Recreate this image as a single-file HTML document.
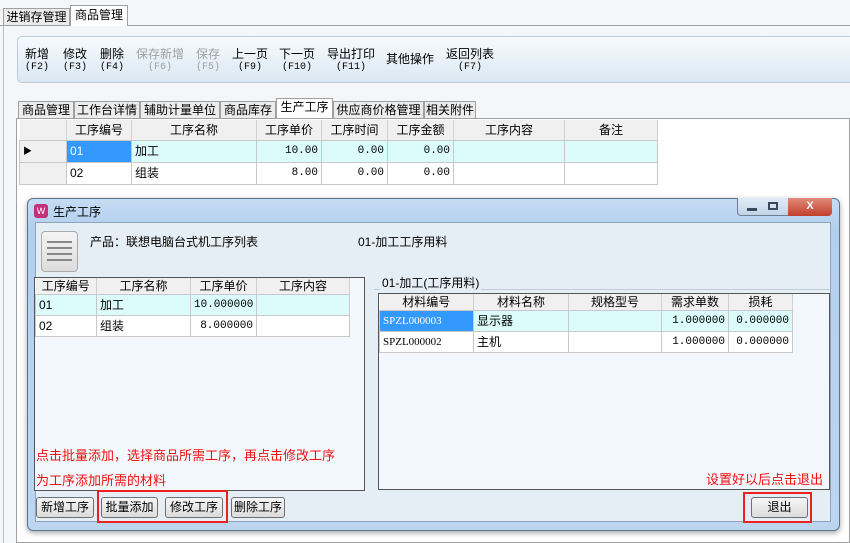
<!DOCTYPE html>
<html><head><meta charset="utf-8"><style>
*{margin:0;padding:0;box-sizing:border-box}
body{width:850px;height:543px;overflow:hidden;background:#f4f6f8;font-family:"Liberation Sans","Noto Sans CJK SC",sans-serif;font-size:12px;color:#000;position:relative}
.a{position:absolute}
.tab{position:absolute;border:1px solid #a0a0a0;border-bottom:none;background:#ececec;text-align:center;font-size:12px;line-height:16px}
.tb{position:absolute;text-align:center;font-size:12px;line-height:13px}
.tb small{display:block;font-size:10px;font-family:"Liberation Mono","Noto Sans CJK SC",monospace}
.g{font-size:12px;border-collapse:collapse;position:absolute;background:#fff;table-layout:fixed}
.g td{border:1px solid #c8c8c8;height:22px;padding:0 3px;white-space:nowrap;line-height:14px;overflow:hidden}
.g th{font-weight:normal;background:#f0f0f0;border-right:1px solid #d0d0d0;border-bottom:1px solid #c8c8c8;height:20px;line-height:14px}
.d td{height:21px}
.d th{height:16px}
.sel td{background:#dcfcfc}
.n{text-align:right;font-family:"Liberation Mono",monospace;font-size:11px}
.btn{position:absolute;height:21px;border:1px solid #707070;border-radius:3px;background:linear-gradient(#f6f6f6,#dcdcdc);text-align:center;line-height:19px;font-size:12px}
.red{color:#f01010;font-size:13px}
</style></head><body>
<div class="a" style="left:0;top:25px;width:850px;height:1px;background:#a0a0a0"></div>
<div class="tab" style="left:3px;top:8px;width:67px;height:17px">进销存管理</div>
<div class="tab" style="left:70px;top:5px;width:58px;height:21px;background:#fff;line-height:19px">商品管理</div>
<div class="a" style="left:3px;top:26px;width:1px;height:517px;background:#c0c0c0"></div>
<div class="a" style="left:17px;top:36px;width:840px;height:47px;border:1px solid #b8cede;border-radius:5px;background:linear-gradient(#f6fafd,#dbe8f3)"></div>
<div class="tb" style="left:22px;top:48px;width:30px">新增<small>(F2)</small></div>
<div class="tb" style="left:60px;top:48px;width:30px">修改<small>(F3)</small></div>
<div class="tb" style="left:97px;top:48px;width:30px">删除<small>(F4)</small></div>
<div class="tb" style="left:136px;top:48px;width:48px;color:#a0a0a0">保存新增<small>(F6)</small></div>
<div class="tb" style="left:193px;top:48px;width:30px;color:#a0a0a0">保存<small>(F5)</small></div>
<div class="tb" style="left:230px;top:48px;width:40px">上一页<small>(F9)</small></div>
<div class="tb" style="left:276px;top:48px;width:42px">下一页<small>(F10)</small></div>
<div class="tb" style="left:325px;top:48px;width:52px">导出打印<small>(F11)</small></div>
<div class="tb" style="left:384px;top:53px;width:52px">其他操作</div>
<div class="tb" style="left:444px;top:48px;width:52px">返回列表<small>(F7)</small></div>
<div class="tab" style="left:18px;top:101px;width:56px;height:17px">商品管理</div>
<div class="tab" style="left:74px;top:101px;width:66px;height:17px">工作台详情</div>
<div class="tab" style="left:140px;top:101px;width:80px;height:17px">辅助计量单位</div>
<div class="tab" style="left:220px;top:101px;width:56px;height:17px">商品库存</div>
<div class="tab" style="left:276px;top:98px;width:57px;height:21px;background:#fff">生产工序</div>
<div class="tab" style="left:333px;top:101px;width:91px;height:17px">供应商价格管理</div>
<div class="tab" style="left:424px;top:101px;width:52px;height:17px">相关附件</div>
<div class="a" style="left:16px;top:118px;width:834px;height:425px;border:1px solid #a0a0a0;background:#fff"></div>
<table class="g" style="left:19px;top:120px;width:639px">
<tr><th style="width:47px"></th><th style="width:65px">工序编号</th><th style="width:125px">工序名称</th><th style="width:65px">工序单价</th><th style="width:66px">工序时间</th><th style="width:66px">工序金额</th><th style="width:111px">工序内容</th><th>备注</th></tr>
<tr class="sel"><td style="background:#f0f0f0;font-size:9px">▶</td><td style="background:#3399ff;color:#fff">01</td><td>加工</td><td class="n">10.00</td><td class="n">0.00</td><td class="n">0.00</td><td></td><td></td></tr>
<tr><td style="background:#f0f0f0"></td><td>02</td><td>组装</td><td class="n">8.00</td><td class="n">0.00</td><td class="n">0.00</td><td></td><td></td></tr>
</table>
<!-- dialog -->
<div class="a" style="left:27px;top:198px;width:813px;height:333px;border:1px solid #5a7590;border-radius:6px;background:linear-gradient(#c6dcf2,#b2cfee 30px,#bcd6f0);box-shadow:0 2px 6px rgba(0,0,0,.35)"></div>
<div class="a" style="left:34px;top:204px;width:14px;height:14px;border-radius:3px;background:#c2307a;color:#fff;font-size:9px;text-align:center;line-height:14px">W</div>
<div class="a" style="left:53px;top:203px;font-size:12px">生产工序</div>
<div class="a" style="left:737px;top:198px;width:95px;height:18px;border:1px solid #6d7f94;border-top:none;border-radius:0 0 4px 4px;background:linear-gradient(#e0ebf7,#c3d4e7)"></div>
<div class="a" style="left:788px;top:198px;width:44px;height:18px;border-radius:0 0 4px 0;background:linear-gradient(#e08a7a,#c2402c);color:#fff;text-align:center;font-weight:bold;font-size:11px;line-height:17px">X</div>
<div class="a" style="left:747px;top:208px;width:10px;height:3px;background:#3a4a5e"></div>
<div class="a" style="left:768px;top:202px;width:10px;height:8px;border:2px solid #3a4a5e"></div>
<div class="a" style="left:35px;top:222px;width:796px;height:300px;border:1px solid #8ea4bc;background:#e6eef5"></div>
<div class="a" style="left:41px;top:231px;width:37px;height:41px;border:1px solid #aaa;border-radius:4px;background:linear-gradient(#f4f4f4,#dcdcdc)"></div>
<div class="a" style="left:47px;top:241px;width:25px;height:2px;background:#888;box-shadow:0 6px #888,0 12px #888,-0 18px #888"></div>
<div class="a" style="left:90px;top:233px;font-size:12px">产品：联想电脑台式机工序列表</div>
<div class="a" style="left:358px;top:233px;font-size:12px">01-加工工序用料</div>
<div class="a" style="left:34px;top:277px;width:331px;height:214px;border:1px solid #555;background:#f2f8fd"></div>
<table class="g d" style="left:35px;top:278px;width:315px">
<tr><th style="width:61px">工序编号</th><th style="width:94px">工序名称</th><th style="width:66px">工序单价</th><th>工序内容</th></tr>
<tr class="sel"><td>01</td><td>加工</td><td class="n">10.000000</td><td></td></tr>
<tr><td>02</td><td>组装</td><td class="n">8.000000</td><td></td></tr>
</table>
<div class="a" style="left:374px;top:289px;width:456px;height:1px;background:#c0ccd8"></div>
<div class="a" style="left:380px;top:276px;background:#e6eef5;padding:0 2px;font-size:12px;line-height:14px">01-加工(工序用料)</div>
<div class="a" style="left:378px;top:293px;width:452px;height:197px;border:1px solid #555;background:#f2f8fd"></div>
<table class="g d" style="left:379px;top:294px;width:414px">
<tr><th style="width:94px">材料编号</th><th style="width:95px">材料名称</th><th style="width:93px">规格型号</th><th style="width:67px">需求单数</th><th>损耗</th></tr>
<tr class="sel"><td style="background:#3399ff;color:#fff;font-family:'Liberation Serif';font-size:11px">SPZL000003</td><td>显示器</td><td></td><td class="n">1.000000</td><td class="n">0.000000</td></tr>
<tr><td style="font-family:'Liberation Serif';font-size:11px">SPZL000002</td><td>主机</td><td></td><td class="n">1.000000</td><td class="n">0.000000</td></tr>
</table>
<div class="a red" style="left:36px;top:445px">点击批量添加，选择商品所需工序，再点击修改工序</div>
<div class="a red" style="left:36px;top:470px">为工序添加所需的材料</div>
<div class="a red" style="left:706px;top:469px">设置好以后点击退出</div>
<div class="btn" style="left:36px;top:497px;width:58px">新增工序</div>
<div class="btn" style="left:101px;top:497px;width:57px">批量添加</div>
<div class="btn" style="left:165px;top:497px;width:58px">修改工序</div>
<div class="btn" style="left:231px;top:497px;width:54px">删除工序</div>
<div class="btn" style="left:751px;top:497px;width:57px">退出</div>
<div class="a" style="left:97px;top:490px;width:131px;height:33px;border:2px solid #f02020"></div>
<div class="a" style="left:743px;top:492px;width:69px;height:31px;border:2px solid #f02020"></div>
</body></html>
